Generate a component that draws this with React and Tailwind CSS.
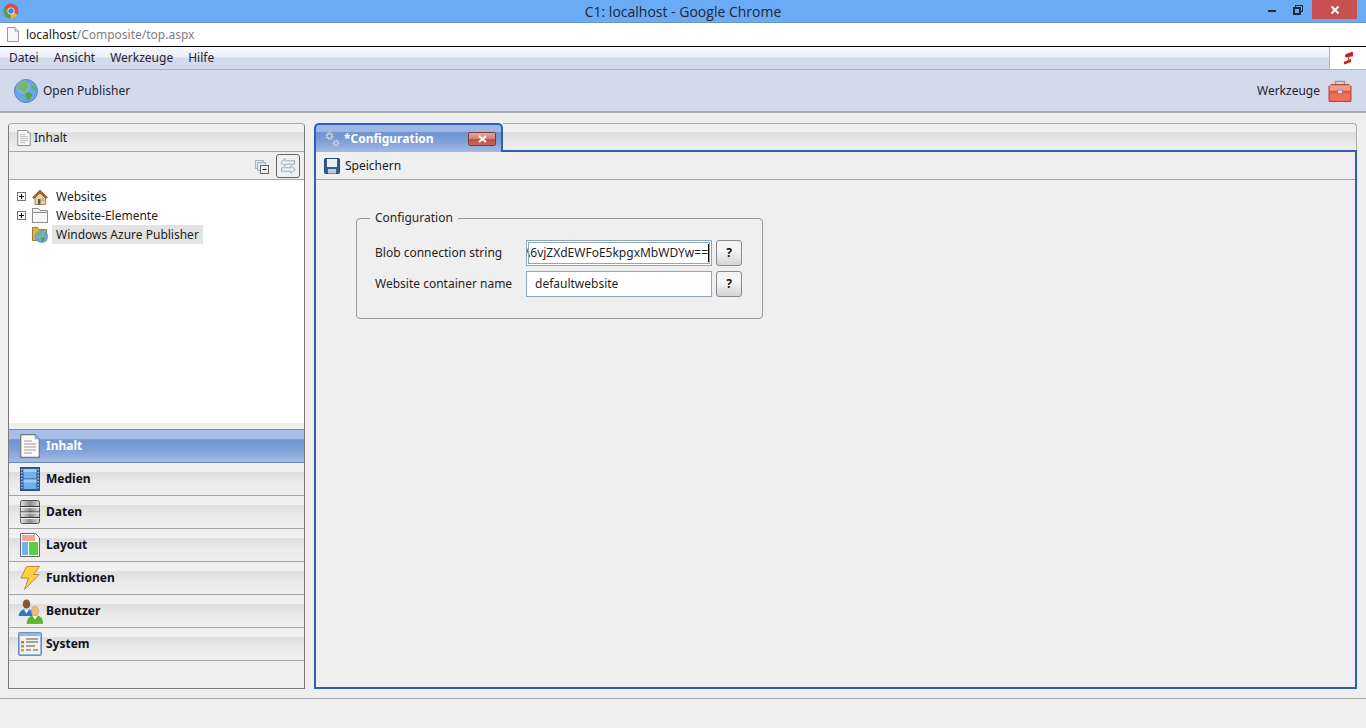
import React from 'react';

const FONT = "font-['Noto_Sans','Liberation_Sans',sans-serif]";

const ChromeLogo = () => (
  <svg width="16" height="16" viewBox="0 0 16 16">
    <circle cx="8" cy="8" r="7.5" fill="#d9503f" />
    <path d="M8 8 L14.5 11.7 A7.5 7.5 0 0 1 4.2 14.5 Z" fill="#e8b93a" />
    <path d="M8 8 L7.5 15.5 A7.5 7.5 0 0 1 1.2 4.6 Z" fill="#5c9e4d" />
    <circle cx="8" cy="8" r="3.6" fill="#e6eef8" />
    <circle cx="8" cy="8" r="2.7" fill="#4a83d4" />
  </svg>
);

const PageIcon = () => (
  <svg width="12" height="15" viewBox="0 0 12 15">
    <path d="M.5.5h7.5l3.5 3.5v10.5h-11z" fill="#f7f7f7" stroke="#9a9a9a" />
    <path d="M8 .5v3.5h3.5" fill="#e4e4e4" stroke="#9a9a9a" />
  </svg>
);

const DocIcon = ({ w = 14, h = 16 }) => (
  <svg width={w} height={h} viewBox="0 0 20 24">
    <path d="M.7.7h14l4.6 4.6v18h-18.6z" fill="#fafafa" stroke="#777" strokeWidth="1.2" />
    <path d="M14.7.7l4.6 4.6h-4.6z" fill="#7db4e6" />
    <path d="M4 7h8M4 10h12M4 13h12M4 16h12M4 19h8" stroke="#bbb" strokeWidth="1.5" />
  </svg>
);

const Globe = ({ size = 24 }) => (
  <svg width={size} height={size} viewBox="0 0 24 24">
    <circle cx="12" cy="12" r="11.5" fill="#6aa6e4" stroke="#5d84b8" />
    <path d="M6 4c3-2 6-2 8-1l-1 3 2 2-3 2-1 4-3-3-4-1-1-3z" fill="#63b046" />
    <path d="M11 14l4-1 3 2-1 4-3 3-2-4z" fill="#5aa53e" />
    <path d="M17 6l3 1 2 4-3 0z" fill="#63b046" />
    <circle cx="9" cy="8" r="7" fill="#ffffff" opacity=".12" />
  </svg>
);

const Toolbox = () => (
  <svg width="24" height="22" viewBox="0 0 24 22">
    <path d="M7.5 5V1.5h9V5" fill="none" stroke="#999" strokeWidth="1.6" />
    <path d="M1 6.5L3 4.5h18l2 2v15h-22z" fill="#f26c5a" stroke="#b24637" />
    <path d="M1 12h22" stroke="#c24a3a" />
    <path d="M2 5.5h20v5h-20z" fill="#f79a88" />
    <rect x="9.5" y="10" width="5" height="3.5" fill="#ddd" stroke="#888" />
  </svg>
);

const FilmIcon = () => (
  <svg width="20" height="24" viewBox="0 0 20 24">
    <rect x=".5" y=".5" width="19" height="23" fill="#36598f" stroke="#2f4f82" />
    <rect x="3.5" y="2" width="13" height="9.5" fill="#6db1f0" />
    <rect x="3.5" y="12.5" width="13" height="9.5" fill="#6db1f0" />
    <rect x="3.5" y="2" width="13" height="3" fill="#9bcbf7" />
    <rect x="3.5" y="12.5" width="13" height="3" fill="#9bcbf7" />
    <path d="M1.8 2v20M18.2 2v20" stroke="#a9c3e4" strokeWidth="1.4" strokeDasharray="1.5 1.5" />
  </svg>
);

const DbIcon = () => (
  <svg width="20" height="24" viewBox="0 0 20 24">
    <defs>
      <linearGradient id="dbg" x1="0" x2="1" y1="0" y2="0">
        <stop offset="0" stopColor="#e6e6e6" />
        <stop offset=".5" stopColor="#8a8a8a" />
        <stop offset="1" stopColor="#dcdcdc" />
      </linearGradient>
    </defs>
    <rect x=".5" y=".5" width="19" height="23" rx="2" fill="url(#dbg)" stroke="#555" />
    <path d="M.5 6.5h19M.5 12h19M.5 17.5h19" stroke="#333" />
    <path d="M.5 7.5h19M.5 13h19M.5 18.5h19" stroke="#f4f4f4" />
  </svg>
);

const LayoutIcon = () => (
  <svg width="20" height="24" viewBox="0 0 20 24">
    <path d="M.5.5h15l4 4v19h-19z" fill="#fafafa" stroke="#666" />
    <rect x="2" y="2" width="13" height="6" fill="#f6a594" />
    <rect x="2" y="9" width="6" height="13" fill="#6db4ee" />
    <rect x="9" y="9" width="9" height="13" fill="#58cf43" />
  </svg>
);

const BoltIcon = () => (
  <svg width="20" height="24" viewBox="0 0 20 24">
    <path d="M6.5.5h13l-6 8h5.5l-14.5 15 4-11.5h-7.5z" fill="#fbd340" stroke="#c8843a" />
  </svg>
);

const UsersIcon = () => (
  <svg width="25" height="25" viewBox="0 0 25 25">
    <path d="M.5 17c.5-4 3-6 5-6.500h6c2 .5 4 2 5 4l-3 2.500z" fill="#2a78cf" />
    <path d="M6 10.500h5l-2.500 4z" fill="#fff" />
    <ellipse cx="8.500" cy="5" rx="3.800" ry="4.500" fill="#7e5a35" />
    <path d="M9 24.500c.5-5 3-7 5-7.500h6c2 .5 4.500 2.500 5 7.500z" fill="#5eb82e" stroke="#3d8a1e" strokeWidth=".5" />
    <path d="M14.500 17h5l-2.500 3.500z" fill="#fff" />
    <ellipse cx="17" cy="12" rx="3.800" ry="4.800" fill="#f0bb82" stroke="#c58e5a" strokeWidth=".5" />
  </svg>
);

const SystemIcon = () => (
  <svg width="24" height="24" viewBox="0 0 24 24">
    <rect x=".5" y=".5" width="23" height="23" rx="1.500" fill="#8fb8e2" stroke="#6b8fb6" />
    <rect x="2" y="4" width="20" height="18" fill="#f3f1e8" />
    <rect x="3" y="9" width="3" height="2.500" fill="#e2674e" />
    <rect x="3" y="13" width="3" height="2.500" fill="#68c052" />
    <rect x="3" y="17" width="3" height="2.500" fill="#e99a37" />
    <path d="M8 7h12M8 10h12M8 14h9M8 18h5M15 18h5" stroke="#888" strokeWidth="1.300" />
  </svg>
);

const HouseIcon = () => (
  <svg width="16" height="16" viewBox="0 0 16 16">
    <path d="M3 8v7.500h10.500v-7.500L8 3z" fill="#e6d3a8" stroke="#8a6a3c" strokeWidth=".8" />
    <path d="M.5 8.500L8 1l7.500 7.500-1.500 1L8 4 2 9.500z" fill="#b85b2c" stroke="#7a3b18" strokeWidth=".6" />
    <rect x="6" y="10" width="2.500" height="5.500" fill="#7a5226" />
    <rect x="9.500" y="9.500" width="2.500" height="2.500" fill="#8cb7dd" />
  </svg>
);

const FolderIcon = () => (
  <svg width="16" height="15" viewBox="0 0 16 15">
    <path d="M.5 14.500v-14h6l1.500 2h7.500v12z" fill="#eee" stroke="#8c8c8c" />
    <path d="M.5 14.500v-10h15v10z" fill="#f8f8f8" stroke="#8c8c8c" />
  </svg>
);

const AzureFolderIcon = () => (
  <div className="relative w-4 h-4">
    <svg width="15" height="14" viewBox="0 0 15 14">
      <path d="M.5 13.500v-13h5l1.500 2h7.500v11z" fill="#e2b24e" stroke="#a37a2a" />
    </svg>
    <div className="absolute left-[3px] top-[3px]">
      <Globe size={13} />
    </div>
  </div>
);

const GearsIcon = () => (
  <svg width="16" height="16" viewBox="0 0 16 16">
    <circle cx="5.500" cy="5" r="3" fill="none" stroke="#c9d3df" strokeWidth="2" strokeDasharray="1.500 .8" />
    <circle cx="5.500" cy="5" r="1.800" fill="#5f7fae" stroke="#e7ebf2" strokeWidth=".7" />
    <circle cx="12" cy="12" r="2.400" fill="none" stroke="#c9d3df" strokeWidth="1.800" strokeDasharray="1.300 .7" />
    <circle cx="12" cy="12" r="1.300" fill="#5f7fae" stroke="#e7ebf2" strokeWidth=".6" />
  </svg>
);

const FloppyIcon = () => (
  <svg width="16" height="16" viewBox="0 0 16 16">
    <path d="M1.500.5h13a1 1 0 0 1 1 1v13a1 1 0 0 1-1 1h-13a1 1 0 0 1-1-1v-13a1 1 0 0 1 1-1z" fill="#2d5f93" stroke="#27486e" />
    <rect x="3" y="1" width="10" height="8" fill="#e9eef4" />
    <path d="M4 15.500v-4.500h8v4.500z" fill="#c2ccd8" />
  </svg>
);

const Expander = () => (
  <svg width="9" height="9" viewBox="0 0 9 9" className="shrink-0">
    <rect x=".5" y=".5" width="8" height="8" fill="#f7f7f7" stroke="#777" />
    <path d="M2 4.500h5M4.500 2v5" stroke="#111" />
  </svg>
);

const CollapseIcon = () => (
  <svg width="14" height="14" viewBox="0 0 14 14">
    <rect x=".5" y=".5" width="8" height="8" fill="#e3e8ee" stroke="#a9b3bf" />
    <rect x="2.500" y="2.500" width="8" height="8" fill="#e3e8ee" stroke="#a9b3bf" />
    <rect x="5.500" y="5.500" width="8" height="8" fill="#eee" stroke="#666" />
    <path d="M7.500 9.500h4" stroke="#222" />
  </svg>
);

const SyncIcon = () => (
  <svg width="16" height="16" viewBox="0 0 16 16" fill="#eef2f6" stroke="#9aa8b8">
    <path d="M.7 4.500L5 .8v2h9.500v3.400h-9.500v2z" />
    <path d="M15.300 11.500L11 7.800v2h-9.500v3.400h9.500v2z" />
  </svg>
);

const LogoMark = () => (
  <svg width="10" height="14" viewBox="0 0 10 14">
    <path d="M9 .8L3 3a2 2 0 0 0 0 3.500l3-.5v3L2.500 10a2 2 0 0 0-1 3.500L8 11V8l-3 .8V6.500l3-1a2 2 0 0 0 1-4.700z" fill="#c8242c" />
  </svg>
);

const NavItem = ({ icon, label, active }) => (
  <div
    className={`h-[33px] flex items-center border-b relative ${
      active
        ? 'border-b-[#6d88b6] border-t border-t-[#8a8a8a] bg-[linear-gradient(#a6bfe6_0%,#a6bfe6_28%,#7095d2_30%,#7e9fd6_60%,#a2bbe3_100%)] -mt-px h-[34px]'
        : 'border-b-[#a4a4a4] bg-[linear-gradient(#f0f0f0_0%,#f0f0f0_28%,#dddddd_30%,#eaeaea_60%,#f0f0f0_100%)]'
    }`}
  >
    <div className="w-[37px] pl-[5px] flex justify-center shrink-0">{icon}</div>
    <span
      className={`text-[12px] font-bold ${active ? 'text-white' : 'text-[#10101a]'}`}
    >
      {label}
    </span>
  </div>
);

const TreeRow = ({ expander, icon, label, selected }) => (
  <div className="h-[19px] flex items-center">
    <div className="w-[9px] mr-[6px] flex justify-center">{expander && <Expander />}</div>
    <div className="w-[16px] mr-[4px] flex justify-center">{icon}</div>
    <span className={`h-[19px] leading-[19px] px-1 text-[12px] text-[#1c1c1c] ${selected ? 'bg-[#e3e3e3]' : ''}`}>
      {label}
    </span>
  </div>
);

const HelpButton = () => (
  <button className="w-[26px] h-[26px] rounded-[3px] border border-[#8a8a8a] bg-[linear-gradient(#f3f3f3_0%,#f3f3f3_45%,#d4d4d4_100%)] text-[12px] font-bold text-[#111] flex items-center justify-center">
    ?
  </button>
);

export default function App() {
  return (
    <div className={`w-[1366px] h-[728px] overflow-hidden flex flex-col bg-[#efefef] ${FONT} text-[12px]`}>
      {/* window chrome */}
      <div className="h-[23px] bg-[#6aabf5] border-b border-b-[#6b95c4] relative flex items-center justify-center shrink-0">
        <div className="absolute left-[3px] top-[3px]">
          <ChromeLogo />
        </div>
        <span className="text-[14px] text-[#1d2733] font-['Open_Sans',sans-serif]">C1: localhost - Google Chrome</span>
        <div className="absolute right-[9px] top-0 flex items-center">
          <div className="w-[8px] h-[2px] bg-[#1d2b3c] mr-[17px] mt-[2px]" />
          <div className="relative w-[10px] h-[10px] mr-[9px]">
            <div className="absolute left-[2px] top-0 w-[8px] h-[7px] border border-[#1d2b3c]" />
            <div className="absolute left-0 top-[2px] w-[8px] h-[8px] border-2 border-[#1d2b3c] bg-[#6aabf5]" />
          </div>
          <div className="w-[45px] h-[19px] bg-[#c75050] flex items-center justify-center text-white">
            <svg width="10" height="10" viewBox="0 0 10 10">
              <path d="M1.500 1.500l7 7M8.500 1.500l-7 7" stroke="#fff" strokeWidth="1.800" />
            </svg>
          </div>
        </div>
      </div>

      <div className="h-[24px] bg-white flex items-center pl-[7px] border-b border-b-black shrink-0">
        <PageIcon />
        <span className="ml-[7px] text-[12px] text-[#1a1a1a]">localhost</span>
        <span className="text-[12px] text-[#7e7e7e]">/Composite/top.aspx</span>
      </div>

      {/* menu */}
      <div className="h-[23px] flex border-b border-b-[#b2b2b2] bg-[linear-gradient(#f6f8fc_0%,#eaeef7_45%,#d3daec_50%,#d3daec_100%)] shrink-0">
        <div className="flex-1 flex items-center pl-[9px] gap-[15px] text-[#1c2433]">
          <span>Datei</span>
          <span>Ansicht</span>
          <span>Werkzeuge</span>
          <span>Hilfe</span>
        </div>
        <div className="w-[37px] bg-white border-l border-l-[#b2b2b2] flex items-center justify-center">
          <LogoMark />
        </div>
      </div>

      {/* toolbar */}
      <div className="h-[43px] bg-[#d3daeb] border-b-2 border-b-[#ababab] flex items-center justify-between pl-[14px] pr-[14px] shrink-0">
        <div className="flex items-center gap-[5px] text-[#1c2433]">
          <Globe />
          <span>Open Publisher</span>
        </div>
        <div className="flex items-center gap-[8px] text-[#1c2433]">
          <span>Werkzeuge</span>
          <Toolbox />
        </div>
      </div>

      {/* main area */}
      <div className="h-[586px] flex pt-[10px] pl-[8px] pr-[9px] pb-[9px] gap-[9px] border-b border-b-[#a8a8a8] shrink-0">
        {/* left panel */}
        <div className="w-[297px] flex flex-col border border-[#7a7a7a] border-t-[#ababab] rounded-t-[4px] overflow-hidden">
          <div className="h-[28px] flex items-center pl-[8px] gap-[3px] border-b border-b-[#a8a8a8] bg-[linear-gradient(#f0f0f0_0%,#f0f0f0_30%,#dcdcdc_32%,#e8e8e8_65%,#f0f0f0_100%)] shrink-0 text-[#1a1a1a]">
            <DocIcon />
            <span>Inhalt</span>
          </div>
          <div className="h-[28px] flex items-center justify-end pr-[4px] border-b border-b-[#a8a8a8] shrink-0">
            <div className="mr-[7px] mt-[2px]">
              <CollapseIcon />
            </div>
            <div className="w-[24px] h-[24px] rounded-[3px] border border-[#666] flex items-center justify-center">
              <SyncIcon />
            </div>
          </div>
          <div className="h-[243px] bg-white pl-[8px] pt-[7px] shrink-0">
            <TreeRow expander icon={<HouseIcon />} label="Websites" />
            <TreeRow expander icon={<FolderIcon />} label="Website-Elemente" />
            <TreeRow icon={<AzureFolderIcon />} label="Windows Azure Publisher" selected />
          </div>
          <div className="flex-1 pt-[7px]">
            <NavItem active icon={<DocIcon w={20} h={24} />} label="Inhalt" />
            <NavItem icon={<FilmIcon />} label="Medien" />
            <NavItem icon={<DbIcon />} label="Daten" />
            <NavItem icon={<LayoutIcon />} label="Layout" />
            <NavItem icon={<BoltIcon />} label="Funktionen" />
            <NavItem icon={<UsersIcon />} label="Benutzer" />
            <NavItem icon={<SystemIcon />} label="System" />
          </div>
        </div>

        {/* right panel */}
        <div className="flex-1 flex flex-col min-w-0">
          <div className="h-[28px] flex shrink-0">
            <div className="w-[189px] h-[29px] relative z-10 rounded-t-[5px] border-x-2 border-t-2 border-[#2b5fb8] border-b-0 bg-[linear-gradient(#9db8e4_0%,#9db8e4_25%,#6e93d0_28%,#7e9fd7_60%,#a2bbe3_100%)] flex items-center pl-[8px]">
              <GearsIcon />
              <span className="ml-[4px] text-white font-bold">*Configuration</span>
              <div className="ml-auto mr-[5px] w-[28px] h-[14px] rounded-[2px] border border-[#7d3c3c] bg-[linear-gradient(#e8a89e_0%,#d87a6e_50%,#b84f44_55%,#c9665a_100%)] flex items-center justify-center">
                <svg width="11" height="8" viewBox="0 0 11 8">
                  <path d="M2 1l7 6M9 1l-7 6" stroke="#fff" strokeWidth="2" />
                </svg>
              </div>
            </div>
            <div className="flex-1 border-t border-t-[#ababab] rounded-tr-[4px] border-r border-r-[#ababab] bg-[linear-gradient(#f0f0f0_0%,#f0f0f0_30%,#dcdcdc_32%,#e8e8e8_65%,#f0f0f0_100%)]" />
          </div>
          <div className="flex-1 border-2 border-[#2b5fb8] -mt-px">
            <div className="h-[28px] flex items-center pl-[8px] gap-[5px] border-b border-b-[#a8a8a8] text-[#1a1a1a]">
              <FloppyIcon />
              <span>Speichern</span>
            </div>
            <fieldset className="ml-[40px] mt-[30px] w-[407px] h-[109px] border border-[#9a9a9a] rounded-[4px] pl-[18px] pr-[20px]">
              <legend className="px-[1px] ml-[-5px] pr-[5px] pl-[5px] text-[12px] text-[#1f1f1f] leading-[16px]">Configuration</legend>
              <div className="flex items-center mt-[14px] h-[26px]">
                <span className="w-[151px] text-[#1f1f1f]">Blob connection string</span>
                <div className="w-[186px] h-[26px] mr-[4px] bg-white border border-[#8fa6bd] outline-1 outline-[#8fa6bd] -outline-offset-3 flex items-center justify-end overflow-hidden pr-[2px] whitespace-nowrap text-[#1f1f1f]">
                  <span className="border-r border-r-black">\6vjZXdEWFoE5kpgxMbWDYw==</span>
                </div>
                <HelpButton />
              </div>
              <div className="flex items-center mt-[5px] h-[26px]">
                <span className="w-[151px] text-[#1f1f1f]">Website container name</span>
                <div className="w-[186px] h-[26px] mr-[4px] bg-white border border-[#8fa6bd] flex items-center pl-[8px] text-[#1f1f1f]">
                  defaultwebsite
                </div>
                <HelpButton />
              </div>
            </fieldset>
          </div>
        </div>
      </div>
    </div>
  );
}
